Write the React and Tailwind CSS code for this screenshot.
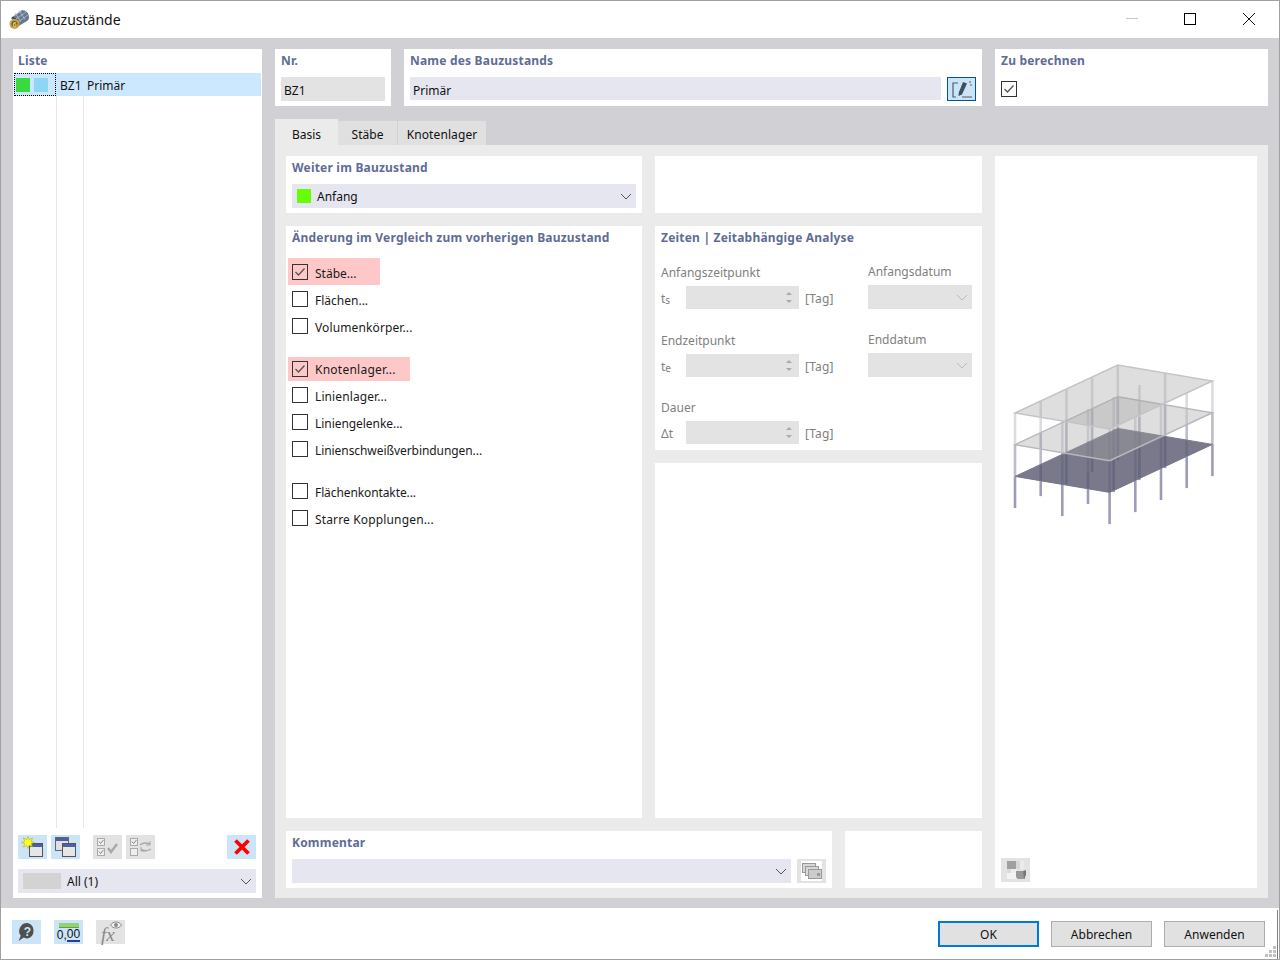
import React from "react";

const Chevron = ({ className = "", color = "#555" }) => (
  <svg width="12" height="7" viewBox="0 0 12 7" className={className}>
    <path d="M1 1l5 5 5-5" fill="none" stroke={color} strokeWidth="1" />
  </svg>
);

const Check = ({ size = 15 }) => (
  <svg width={size} height={size} viewBox="0 0 16 16" className="shrink-0">
    <rect x="0.5" y="0.5" width="15" height="15" fill="none" stroke="#333" strokeWidth="1" />
    <path d="M3.5 8l3 3 6-6.5" fill="none" stroke="#555" strokeWidth="1.3" />
  </svg>
);

const Empty = () => <div className="w-[16px] h-[16px] border border-[#333] bg-white shrink-0" />;

const Title = ({ children, className = "" }) => (
  <div className={`text-[12px] leading-[16px] font-bold tracking-[0.2px] text-[#5f6c96] ${className}`}>{children}</div>
);

const IconBtn = ({ blue, children, className = "" }) => (
  <div className={`w-[29px] h-[24px] flex items-center justify-center shrink-0 ${blue ? "bg-[#cce4f7]" : "bg-[#e3e3e3]"} ${className}`}>
    {children}
  </div>
);

const Win = ({ x, y }) => (
  <g>
    <rect x={x + 0.5} y={y + 0.5} width="13" height="13" fill="#e6e6e6" stroke="#555" />
    <rect x={x + 1} y={y + 1} width="12" height="3" fill="#4a5fa8" />
  </g>
);

const NewIcon = () => (
  <svg width="24" height="22" viewBox="0 0 24 22">
    <Win x={8} y={7} />
    <polygon points="7,0.500 8.200,3.700 11.600,1.900 10.200,5.300 13.500,6.500 10.200,7.700 11.600,11.100 8.200,9.300 7,12.500 5.800,9.300 2.400,11.100 3.800,7.700 0.500,6.500 3.800,5.300 2.400,1.900 5.800,3.700" fill="#ffff1e" stroke="#a89a2a" strokeWidth=".5" />
  </svg>
);
const CopyIcon = () => (
  <svg width="24" height="22" viewBox="0 0 24 22">
    <rect x="1.500" y="1.500" width="13" height="13" fill="#e0e0e0" stroke="#666" />
    <rect x="2" y="2" width="12" height="3" fill="#4a5fa8" />
    <Win x={8} y={7} />
  </svg>
);
const CheckAllIcon = () => (
  <svg width="24" height="22" viewBox="0 0 24 22" fill="none">
    <rect x="1.500" y="2.500" width="7" height="7" stroke="#aaa" fill="#eee" />
    <rect x="1.500" y="12.500" width="7" height="7" stroke="#aaa" fill="#eee" />
    <path d="M3 5.500l1.600 2L7.400 4M3 15.500l1.600 2 2.800-3.500" stroke="#888" />
    <path d="M12 12l3 4 6-8" stroke="#a8a8a8" strokeWidth="2.400" />
  </svg>
);
const SwapIcon = () => (
  <svg width="24" height="22" viewBox="0 0 24 22" fill="none">
    <rect x="1.500" y="2.500" width="7" height="7" stroke="#aaa" fill="#eee" />
    <rect x="1.500" y="12.500" width="7" height="7" stroke="#aaa" fill="#eee" />
    <path d="M3 5.500l1.600 2L7.400 4" stroke="#888" />
    <path d="M11 9c3-2.500 6-2.500 10-1M22 13c-3 2-7 2-10 .5" stroke="#a8a8a8" strokeWidth="1.400" />
    <path d="M21 5v4h-4M12 11v4h4" stroke="#a8a8a8" strokeWidth="1" />
  </svg>
);
const RedX = () => (
  <svg width="16" height="16" viewBox="0 0 16 16">
    <path d="M1.500 1.500l13 13M14.500 1.500l-13 13" stroke="#f00" strokeWidth="3.800" />
  </svg>
);
const HelpIcon = () => (
  <svg width="20" height="20" viewBox="0 0 20 20">
    <path d="M10.500 1a8 8 0 0 1 0 15.500c-1.400 0-2.600-.3-3.700-.9L1.500 19l2.300-5.200A8 8 0 0 1 10.500 1z" fill="#4f4f4f" />
    <text x="10.500" y="13.500" textAnchor="middle" fontSize="12" fontWeight="700" fill="#cce4f7" fontFamily="Liberation Sans, sans-serif">?</text>
  </svg>
);
const ZeroIcon = () => (
  <div className="flex flex-col items-center w-[22px]">
    <div className="w-[20px] h-[5px] bg-[#8fd46f] border-b border-[#5f9f4f]" />
    <div className="text-[12px] leading-[13px] font-medium font-['Liberation_Sans',sans-serif] text-[#111] flex mt-px">
      0,<span className="text-[#111] border-b-2 border-[#24408e] leading-[11px] h-[13px]">00</span>
    </div>
  </div>
);
const FxIcon = () => (
  <div className="relative w-[25px] h-[23px]">
    <span className="absolute left-[3px] top-[4px] text-[19px] leading-[19px] italic text-[#888] font-['Liberation_Serif',serif]">fx</span>
    <svg width="12" height="8" viewBox="0 0 12 8" className="absolute right-[1px] top-0">
      <path d="M.5 4C3 0 9 0 11.500 4 9 8 3 8 .5 4z" fill="#f4f4f4" stroke="#888" />
      <circle cx="6" cy="4" r="2" fill="#888" />
    </svg>
  </div>
);
const EditIcon = () => (
  <svg width="24" height="20" viewBox="0 0 24 20" fill="none">
    <path d="M8 4H3v14h3M12 18h10" stroke="#4a5f70" strokeWidth="1.200" />
    <path d="M13 3l4 1.500-5 11-3.500 1.500 .3-3.500z" fill="#3f4f5c" />
    <path d="M19 3h2M20 6h2" stroke="#4a5f70" />
  </svg>
);
const CommentIcon = () => (
  <div className="w-[21px] h-[20px] bg-white flex items-center justify-center">
    <svg width="20" height="16" viewBox="0 0 20 16">
      <rect x="0.500" y="0.500" width="13" height="9" fill="#d8d8d8" stroke="#999" />
      <rect x="3.500" y="3.500" width="13" height="9" fill="#d8d8d8" stroke="#999" />
      <rect x="6.500" y="6.500" width="13" height="9" fill="#ccc" stroke="#999" />
      <rect x="15" y="10" width="3" height="3" fill="#999" />
    </svg>
  </div>
);
const ViewIcon = () => (
  <svg width="24" height="22" viewBox="0 0 24 22">
    <rect x="3" y="2" width="9" height="8" fill="#a0a0a0" />
    <rect x="12" y="2" width="4" height="8" fill="#d8d8d8" />
    <rect x="16" y="2" width="4" height="8" fill="#ececec" />
    <rect x="3" y="10" width="4" height="4" fill="#dcdcdc" />
    <rect x="3" y="14" width="9" height="6" fill="#f4f4f4" />
    <rect x="7" y="10" width="6" height="4" fill="#eeeeee" />
    <path d="M12 12h7l2 2v6h-7l-2-2z" fill="#999" />
    <path d="M19 12l3-1v5l-2 4z" fill="#777" />
  </svg>
);
const AppIcon = () => (
  <svg width="21" height="21" viewBox="0 0 21 21">
    <path d="M2 9L12 1.500c3-1 6.500 1 7.500 4s.5 5.500-1.500 6.500L8 18z" fill="#66768f" />
    <path d="M5 7l8-5.500M7 10l10-7M9 13l10-7M6 4l6 9M10 1.500l6 9" stroke="#b6c2d2" strokeWidth=".8" />
    <path d="M3 8.500c3 0 5.500 3 5 9" stroke="#3a4558" strokeWidth="1.500" fill="none" />
    <circle cx="5.500" cy="15" r="5" fill="#c9a53a" />
    <circle cx="5.500" cy="15" r="3" fill="#5a5238" />
    <text x="5.500" y="17.800" textAnchor="middle" fontSize="7.500" fontWeight="700" fill="#f0d36a" fontFamily="Liberation Sans, sans-serif">6</text>
  </svg>
);

const ox = 15, oy = 63;
const P = (i, j, h) => [ox + i * 25.7 + j * 47.3, oy - i * 12 + j * 8 + h * 31.7];
const pt = (a) => `${a[0]},${a[1]}`;
const slab = (h) => [P(0, 0, h), P(4, 0, h), P(4, 2, h), P(0, 2, h)].map(pt).join(" ");
const Building = () => {
  const cols = [];
  for (let i = 0; i <= 4; i++) for (let j = 0; j <= 2; j++) cols.push([i, j]);
  return (
    <svg width="230" height="185" viewBox="0 0 230 185" className="block blur-[0.6px]">
      {cols.map(([i, j]) => {
        const a = P(i, j, 0), b = P(i, j, 1), c = P(i, j, 2), d = P(i, j, 3);
        return (
          <g key={`${i}${j}`} strokeWidth="2.600">
            <line x1={a[0]} y1={a[1]} x2={b[0]} y2={b[1]} stroke="#dcdce0" />
            <line x1={b[0]} y1={b[1]} x2={c[0]} y2={c[1]} stroke="#bcbccc" />
            <line x1={c[0]} y1={c[1]} x2={d[0]} y2={d[1]} stroke="#9c9cba" />
          </g>
        );
      })}
      <polygon points={slab(2)} fill="#5c5c72" fillOpacity=".82" stroke="#77778c" strokeWidth="1" />
      <polygon points={slab(1)} fill="#a4a4a4" fillOpacity=".36" stroke="#b8b8bc" strokeWidth="1.400" />
      <polygon points={slab(0)} fill="#a4a4a4" fillOpacity=".36" stroke="#c4c4c8" strokeWidth="1.400" />
    </svg>
  );
};

const ChkRow = ({ label, checked, hl, top, textCls = "top-[2px]" }) => (
  <div className={`h-[27px] flex items-end ${top ? "mt-[15px]" : ""}`}>
    <div className={`flex items-center pl-[4px] ${hl ? `bg-[#ffc8c8] ${hl}` : "h-[27px]"}`}>
      {checked ? <Check size={16} /> : <Empty />}
      <span className={`ml-[7px] text-[12px] leading-[16px] text-[#1a1a1a] relative ${textCls}`}>{label}</span>
    </div>
  </div>
);

const Spin = () => (
  <div className="flex flex-col items-center gap-[5px] mr-[7px]">
    <div className="w-0 h-0 border-x-[3px] border-x-transparent border-b-[3px] border-b-[#aaa]" />
    <div className="w-0 h-0 border-x-[3px] border-x-transparent border-t-[3px] border-t-[#aaa]" />
  </div>
);

const TimeRow = ({ label, sym, sub, mt = "" }) => (
  <div className={`flex flex-col ${mt}`}>
    <div className="h-[18px] text-[12px] leading-[20px] text-[#808080]">{label}</div>
    <div className="flex items-center mt-[5px] h-[23px]">
      <span className="w-[25px] text-[12px] text-[#808080] relative top-px">
        {sym}
        {sub && <span className="text-[10px] relative top-[1px]">{sub}</span>}
      </span>
      <div className="w-[113px] h-[23px] bg-[#e3e3e3] flex items-center justify-end"><Spin /></div>
      <span className="ml-[6px] text-[12px] tracking-[0.2px] text-[#808080] relative top-px">[Tag]</span>
    </div>
  </div>
);

const DateRow = ({ label, mt = "" }) => (
  <div className={`flex flex-col ${mt}`}>
    <div className="h-[18px] text-[12px] leading-[20px] text-[#808080]">{label}</div>
    <div className="w-[104px] h-[24px] mt-[5px] bg-[#e3e3e3] flex items-center justify-end pr-[4px]">
      <Chevron color="#bbb" />
    </div>
  </div>
);

const FootBtn = ({ children, primary }) => (
  <div className={`w-[101px] h-[26px] flex items-center justify-center bg-[#e1e1e1] text-[12px] text-[#111] ${primary ? "border-2 border-[#0078d7]" : "border border-[#adadad]"}`}>
    <span className="relative top-px">{children}</span>
  </div>
);

const G = () => <div className="w-[3px] h-[3px] bg-[#c0c0c0]" />;

export default function App() {
  return (
    <div className="w-[1280px] h-[960px] flex flex-col border border-[#a0a0a0] bg-white font-['Noto_Sans',sans-serif] overflow-hidden">
      {/* Title bar */}
      <div className="h-[37px] shrink-0 flex items-center pl-[8px] bg-white">
        <AppIcon />
        <span className="ml-[5px] text-[14px] text-[#111]">Bauzustände</span>
        <div className="ml-auto flex items-center pr-[24px] mb-[2px]">
          <div className="w-[12px] h-px bg-[#c8c8c8]" />
          <div className="ml-[46px] w-[12px] h-[12px] border border-black" />
          <svg width="12" height="12" viewBox="0 0 12 12" className="ml-[47px]">
            <path d="M0 0l12 12M12 0L0 12" stroke="#111" strokeWidth="1" />
          </svg>
        </div>
      </div>

      {/* Body */}
      <div className="h-[870px] shrink-0 flex gap-[13px] bg-[#d0d0d5] pt-[11px] pb-[10px] pl-[12px] pr-[11px]">
        {/* Liste */}
        <div className="w-[249px] shrink-0 bg-white flex flex-col">
          <Title className="pl-[5px] pt-[4px] h-[24px]">Liste</Title>
          <div className="ml-px mr-px h-[23px] bg-[#cce8ff] flex items-center text-[12px] text-[#111]">
            <div className="w-[42px] h-[23px] border border-dotted border-black flex items-center gap-[4px] pl-[1px] shrink-0">
              <div className="w-[14px] h-[14px] bg-[#39d93f]" />
              <div className="w-[14px] h-[14px] bg-[#8fd6f5]" />
            </div>
            <span className="ml-[4px] w-[27px] relative top-px">BZ1</span>
            <span className="relative top-px">Primär</span>
          </div>
          <div className="flex-1 flex pl-[43px]">
            <div className="w-[28px] border-x border-[#e6e6e6]" />
          </div>
          <div className="flex items-center pl-[5px] pr-[6px] h-[24px] mt-[7px]">
            <IconBtn blue><NewIcon /></IconBtn>
            <IconBtn blue className="ml-[4px]"><CopyIcon /></IconBtn>
            <IconBtn className="ml-[13px]"><CheckAllIcon /></IconBtn>
            <IconBtn className="ml-[4px]"><SwapIcon /></IconBtn>
            <IconBtn blue className="ml-auto"><RedX /></IconBtn>
          </div>
          <div className="ml-[5px] mr-[6px] mt-[10px] mb-[5px] h-[24px] bg-[#e6e6f0] flex items-center pl-[5px] pr-[4px]">
            <div className="w-[38px] h-[16px] bg-[#d3d3d3]" />
            <span className="ml-[6px] text-[12px] text-[#111] relative top-px">All (1)</span>
            <Chevron className="ml-auto" />
          </div>
        </div>

        {/* Right */}
        <div className="flex-1 flex flex-col min-w-0">
          <div className="h-[57px] flex gap-[13px] shrink-0">
            <div className="w-[116px] bg-white px-[6px]">
              <Title className="pt-[4px]">Nr.</Title>
              <div className="mt-[8px] w-[104px] h-[24px] bg-[#e3e3e3] pl-[3px] flex items-center text-[12px] text-[#111]"><span className="relative top-[2px]">BZ1</span></div>
            </div>
            <div className="w-[578px] bg-white px-[6px]">
              <Title className="pt-[4px]">Name des Bauzustands</Title>
              <div className="mt-[8px] flex gap-[6px]">
                <div className="w-[531px] h-[23px] bg-[#e6e6f0] pl-[3px] flex items-center text-[12px] text-[#111]"><span className="relative top-[2px]">Primär</span></div>
                <div className="w-[29px] h-[24px] bg-[#cce4f7] border border-[#005499] flex items-center justify-center"><EditIcon /></div>
              </div>
            </div>
            <div className="flex-1 bg-white px-[6px]">
              <Title className="pt-[4px]">Zu berechnen</Title>
              <div className="mt-[12px]"><Check size={16} /></div>
            </div>
          </div>

          {/* Tabs */}
          <div className="mt-[13px] h-[26px] flex items-end shrink-0 text-[12px] text-[#111]">
            <div className="w-[63px] h-[26px] bg-[#ebebeb] flex items-center justify-center"><span className="relative top-[3px]">Basis</span></div>
            <div className="w-[60px] h-[24px] bg-[#e0e0e0] flex items-center justify-center border-r border-[#d0d0d5]"><span className="relative top-[2px]">Stäbe</span></div>
            <div className="w-[88px] h-[24px] bg-[#e0e0e0] flex items-center justify-center"><span className="relative top-[2px] tracking-[0.1px]">Knotenlager</span></div>
          </div>

          {/* Tab panel */}
          <div className="flex-1 bg-[#ebebeb] pt-[11px] px-[11px] pb-[10px] flex gap-[13px] min-h-0">
            <div className="w-[696px] flex flex-col gap-[13px] shrink-0">
              <div className="h-[57px] flex gap-[13px] shrink-0">
                <div className="w-[356px] bg-white px-[6px]">
                  <Title className="pt-[4px]">Weiter im Bauzustand</Title>
                  <div className="mt-[8px] h-[24px] w-[344px] bg-[#e6e6f0] flex items-center pl-[5px] pr-[4px] text-[12px] text-[#111]">
                    <div className="w-[14px] h-[14px] bg-[#66ff00]" />
                    <span className="ml-[6px] relative top-px">Anfang</span>
                    <Chevron className="ml-auto" />
                  </div>
                </div>
                <div className="w-[327px] bg-white" />
              </div>

              <div className="flex-1 flex gap-[13px] min-h-0">
                <div className="w-[356px] bg-white">
                  <Title className="pl-[6px] pt-[4px] h-[32px]">Änderung im Vergleich zum vorherigen Bauzustand</Title>
                  <div className="pl-[2px]">
                    <ChkRow label="Stäbe..." checked hl="w-[92px] h-[27px]" />
                    <ChkRow label="Flächen..." />
                    <ChkRow label="Volumenkörper..." textCls="top-[2px] tracking-[0.12px]" />
                    <ChkRow label="Knotenlager..." checked hl="w-[122px] h-[24px]" top textCls="top-px tracking-[0.25px]" />
                    <ChkRow label="Linienlager..." textCls="top-[2px] tracking-[0.1px]" />
                    <ChkRow label="Liniengelenke..." textCls="top-[2px] tracking-[-0.05px]" />
                    <ChkRow label="Linienschweißverbindungen..." textCls="top-[2px] tracking-[-0.07px]" />
                    <ChkRow label="Flächenkontakte..." top textCls="top-[2px] tracking-[-0.1px]" />
                    <ChkRow label="Starre Kopplungen..." textCls="top-[2px] tracking-[0.15px]" />
                  </div>
                </div>
                <div className="w-[327px] flex flex-col gap-[13px]">
                  <div className="h-[224px] bg-white px-[6px] shrink-0">
                    <Title className="pt-[4px] h-[37px]">Zeiten | Zeitabhängige Analyse</Title>
                    <div className="flex">
                      <div className="w-[207px] flex flex-col">
                        <TimeRow label="Anfangszeitpunkt" sym="t" sub="s" />
                        <TimeRow label="Endzeitpunkt" sym="t" sub="e" mt="mt-[22px]" />
                        <TimeRow label="Dauer" sym="Δt" mt="mt-[21px]" />
                      </div>
                      <div className="flex flex-col -mt-[1px]">
                        <DateRow label="Anfangsdatum" />
                        <DateRow label="Enddatum" mt="mt-[21px]" />
                      </div>
                    </div>
                  </div>
                  <div className="flex-1 bg-white" />
                </div>
              </div>

              <div className="h-[57px] flex gap-[13px] shrink-0">
                <div className="w-[546px] bg-white px-[6px]">
                  <Title className="pt-[4px]">Kommentar</Title>
                  <div className="mt-[8px] flex gap-[6px]">
                    <div className="w-[499px] h-[24px] bg-[#e6e6f0] flex items-center justify-end pr-[4px]"><Chevron /></div>
                    <IconBtn><CommentIcon /></IconBtn>
                  </div>
                </div>
                <div className="flex-1 bg-white" />
              </div>
            </div>

            <div className="flex-1 bg-white flex flex-col">
              <div className="mt-[194px] ml-[5px]"><Building /></div>
              <div className="mt-auto ml-[6px] mb-[6px]"><IconBtn><ViewIcon /></IconBtn></div>
            </div>
          </div>
        </div>
      </div>

      {/* Footer */}
      <div className="flex-1 flex bg-white pl-[11px] pr-[14px] pt-[12px] relative">
        <IconBtn blue><HelpIcon /></IconBtn>
        <IconBtn blue className="ml-[13px]"><ZeroIcon /></IconBtn>
        <IconBtn className="ml-[13px]"><FxIcon /></IconBtn>
        <div className="ml-auto flex gap-[12px] pt-px">
          <FootBtn primary>OK</FootBtn>
          <FootBtn>Abbrechen</FootBtn>
          <FootBtn>Anwenden</FootBtn>
        </div>
        <div className="absolute right-[1px] top-[2px] bottom-0 w-px bg-[#808080]" />
        <div className="absolute right-[3px] bottom-[2px] grid grid-cols-3 gap-px w-[11px]">
          <div /><div /><G />
          <div /><G /><G />
          <G /><G /><G />
        </div>
      </div>
    </div>
  );
}
